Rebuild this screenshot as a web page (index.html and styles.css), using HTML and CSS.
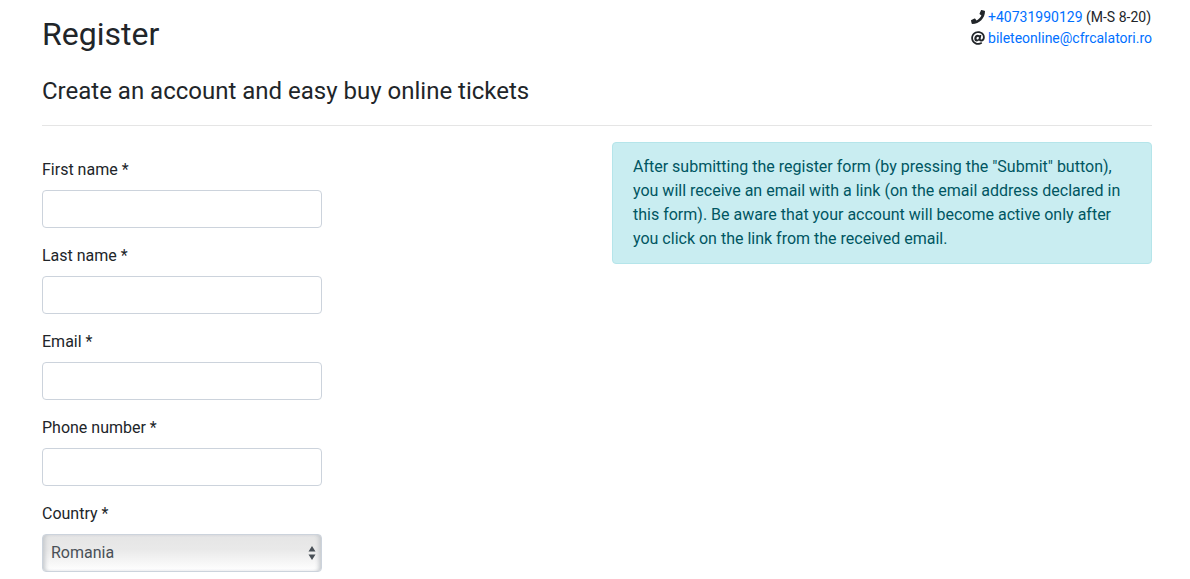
FILE: index.html
```html
<!DOCTYPE html>
<html lang="en">
<head>
<meta charset="utf-8">
<title>Register</title>
<meta name="viewport" content="width=device-width, initial-scale=1">
<link rel="stylesheet" href="styles.css">
</head>
<body>
<main class="container">
  <header class="page-header">
    <h1 class="title">Register</h1>
    <address class="contact">
      <div class="contact-line">
        <svg class="icon" viewBox="0 0 512 512" aria-hidden="true"><path d="M493.400 24.600l-104-24c-11.300-2.600-22.900 3.300-27.500 13.900l-48 112c-4.200 9.800-1.400 21.300 6.900 28l60.600 49.600c-36 76.700-98.900 140.500-177.200 177.200l-49.600-60.600c-6.800-8.300-18.200-11.100-28-6.900l-112 48C3.900 366.500-2 378.100.6 389.400l24 104C27.100 504.200 36.700 512 48 512c256.100 0 464-207.500 464-464 0-11.200-7.700-20.900-18.600-23.400z"/></svg>
        <a href="tel:+40731990129">+40731990129</a> (M-S 8-20)
      </div>
      <div class="contact-line">
        <svg class="icon" viewBox="0 0 512 512" aria-hidden="true"><path d="M256 8C118.941 8 8 118.919 8 256c0 137.058 110.919 248 248 248 52.925 0 104.680-17.078 147.092-48.319 5.501-4.052 6.423-11.924 2.095-17.211l-20.253-24.735c-4.018-4.908-11.133-5.825-16.303-2.146C336.187 424.908 296.201 438 256 438c-100.355 0-182-81.645-182-182S155.645 74 256 74c94.439 0 182 55.303 182 150 0 59.111-37.501 89.876-71.077 89.876-16.156 0-16.638-10.565-13.459-26.381l24.544-128.206c1.420-7.417-4.261-14.289-11.813-14.289h-44.981a13.518 13.518 0 0 0-13.432 11.993c-.389 3.297-.787 5.452-.893 9.091-11.521-15.903-33.707-25.366-61.019-25.366C180.554 140.718 120 195.934 120 282.692 120 341.991 152.782 384 215.240 384c28.480 0 60.552-16.373 79.189-41.822 1.392 30.457 28.612 38.210 63.407 38.210C469.505 380.388 504 306.947 504 224 504 89.654 393.382 8 256 8zm-21.680 304.430c-20.490 0-32.730-13.890-32.730-37.150 0-41.630 28.470-67.280 54.280-67.280 20.660 0 32.520 13.120 32.520 35.990 0 35.390-26.410 68.440-54.070 68.440z"/></svg>
        <a href="mailto:bileteonline@cfrcalatori.ro">bileteonline@cfrcalatori.ro</a>
      </div>
    </address>
  </header>
  <h2 class="subtitle">Create an account and easy buy online tickets</h2>
  <hr class="divider">
  <div class="columns">
    <form class="form">
      <div class="field"><label for="first">First name *</label><input class="control" id="first" type="text" required></div>
      <div class="field"><label for="last">Last name *</label><input class="control" id="last" type="text" required></div>
      <div class="field"><label for="email">Email *</label><input class="control" id="email" type="email" required></div>
      <div class="field"><label for="phone">Phone number *</label><input class="control" id="phone" type="tel" required></div>
      <div class="field">
        <label for="country">Country *</label>
        <div class="select-wrap">
          <select class="control select" id="country" required><option>Romania</option></select>
          <svg class="arrows" viewBox="0 0 8 14" aria-hidden="true"><path d="M4 0L7.500 5.500H.5zM4 14L.5 8.500h7z"/></svg>
        </div>
      </div>
    </form>
    <aside class="notice">After submitting the register form (by pressing the "Submit" button), you will receive an email with a link (on the email address declared in this form). Be aware that your account will become active only after you click on the link from the received email.</aside>
  </div>
</main>
</body>
</html>
```

FILE: styles.css
```css
* { box-sizing: border-box; }
body {
  margin: 0;
  background: #fff;
  color: #212529;
  font: 400 16px/24px Roboto, sans-serif;
}
a { color: #0070ff; text-decoration: none; }
.container { padding: 7px 38px 0 42px; }
.page-header { display: flex; justify-content: space-between; align-items: flex-start; }
.title { margin: 8px 0 0; font-size: 32px; line-height: 38px; font-weight: 400; }
.contact { font-size: 14px; line-height: 21px; font-style: normal; }
.icon { width: 14px; height: 14px; vertical-align: -2px; fill: #212529; }
.subtitle { margin: 24px 0 0; font-size: 24px; line-height: 28px; font-weight: 400; }
.divider { margin: 20px 0 16px; border: 0; border-top: 1px solid #e5e5e5; }
.columns { display: grid; grid-template-columns: 1fr 1fr; gap: 30px; align-items: start; }
.form { padding-top: 16px; }
.field { margin-bottom: 16px; }
.field label { display: block; margin-bottom: 8px; }
.control {
  display: block;
  width: 280px;
  max-width: 100%;
  height: 38px;
  padding: 6px 12px;
  border: 1px solid #ccd3dc;
  border-radius: 4px;
  background: #fff;
  color: #495057;
  font: inherit;
}
.select-wrap { position: relative; width: 280px; max-width: 100%; }
.select {
  appearance: none;
  padding: 6px 8px;
  background: linear-gradient(#e5e5e5, #e9e9e9 40%, #fff);
  box-shadow: inset 4px 0 4px -2px #c4c8cc, inset -4px 0 4px -2px #c4c8cc;
}
.arrows { position: absolute; right: 6px; top: 12px; width: 8px; height: 14px; fill: #495057; pointer-events: none; }
.notice {
  padding: 12px 20px;
  border: 1px solid #b5e5ea;
  border-radius: 4px;
  background: #c9edf1;
  color: #005662;
}
```
